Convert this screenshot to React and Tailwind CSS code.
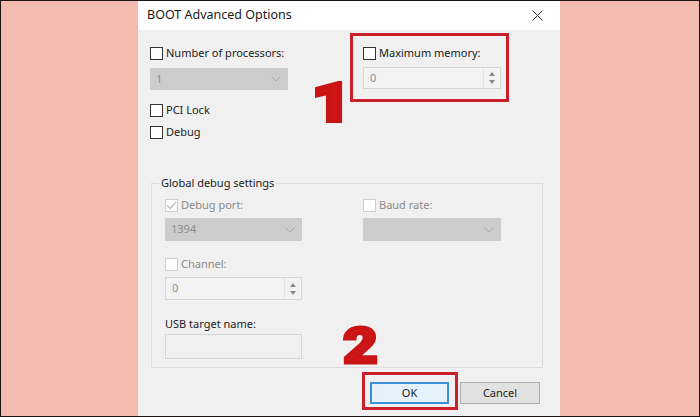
import React from "react";

function Box({ checked, disabled }) {
  return (
    <span
      className={
        disabled
          ? "w-[13px] h-[13px] border border-[#cfcfcf] bg-white flex items-center justify-center shrink-0"
          : "w-[13px] h-[13px] border border-[#333333] bg-white flex items-center justify-center shrink-0"
      }
    >
      {checked && (
        <svg width="11" height="9" viewBox="0 0 11 9">
          <path d="M1 4.5 L4 7.5 L10 1" fill="none" stroke="#bdbdbd" strokeWidth="1.3" />
        </svg>
      )}
    </span>
  );
}

function CheckRow({ label, checked, disabled, className = "" }) {
  return (
    <div className={`flex items-center h-[14px] whitespace-nowrap ${className}`}>
      <Box checked={checked} disabled={disabled} />
      <span className={disabled ? "ml-[3px] text-[11px] leading-[14px] text-[#8a8a8a]" : "ml-[3px] text-[11px] leading-[14px] text-[#1b1b1b]"}>
        {label}
      </span>
    </div>
  );
}

function Dropdown({ value, className = "" }) {
  return (
    <div className={`bg-[#cccccc] flex items-center justify-between pl-[6px] pr-[7px] text-[11px] text-[#8e8e8e] ${className}`}>
      <span>{value}</span>
      <svg width="10" height="6" viewBox="0 0 10 6">
        <path d="M0.5 0.5 L5 5 L9.5 0.5" fill="none" stroke="#a9a9a9" strokeWidth="1" />
      </svg>
    </div>
  );
}

function Spinner({ value, className = "" }) {
  return (
    <div className={`border border-[#d6d6d6] bg-[#f3f3f3] flex text-[11px] text-[#8e8e8e] ${className}`}>
      <span className="flex-1 flex items-center pl-[6px]">{value}</span>
      <div className="w-[17px] border-l border-[#e2e2e2] flex flex-col items-center justify-center gap-[4px]">
        <svg width="6" height="4" viewBox="0 0 6 4">
          <path d="M0 4 L3 0 L6 4 Z" fill="#8a8a8a" />
        </svg>
        <svg width="6" height="4" viewBox="0 0 6 4">
          <path d="M0 0 L3 4 L6 0 Z" fill="#8a8a8a" />
        </svg>
      </div>
    </div>
  );
}

export default function App() {
  return (
    <div className="relative w-[700px] h-[417px] overflow-hidden border border-[#1e1412] bg-[#f4bcb0] pl-[137px] [font-family:'Noto_Sans',sans-serif]">
      <div className="w-[422px] h-full flex flex-col bg-[#f0f0f0]">
        {/* title bar */}
        <div className="h-[29px] bg-white flex items-center justify-between pl-[9px] pr-[17px]">
          <span className="text-[12.5px] text-[#1a1a1a]">BOOT Advanced Options</span>
          <svg width="11" height="11" viewBox="0 0 11 11">
            <path d="M0.5 0.5 L10.5 10.5 M10.5 0.5 L0.5 10.5" stroke="#2a2a2a" strokeWidth="1" />
          </svg>
        </div>

        <div className="flex-1 flex flex-col pl-[12px] pr-[20px]">
          {/* top options */}
          <div className="flex pt-[3px]">
            <div className="w-[138px] pt-[13px] flex flex-col">
              <CheckRow label="Number of processors:" />
              <Dropdown value="1" className="mt-[8px] h-[22px]" />
              <CheckRow label="PCI Lock" className="mt-[13px]" />
              <CheckRow label="Debug" className="mt-[8px]" />
            </div>
            <div className="ml-[62px] w-[159px] h-[69px] border-[3px] border-[#c9212b] pt-[10px] pl-[10px]">
              <CheckRow label="Maximum memory:" />
              <Spinner value="0" className="mt-[7px] w-[138px] h-[22px]" />
            </div>
          </div>

          {/* group box */}
          <fieldset className="mt-[37px] ml-[1px] w-[392px] border border-[#dcdcdc]">
            <legend className="ml-[7px] px-[2px] text-[11px] leading-[14px] text-[#1b1b1b]">
              Global debug settings
            </legend>
            <div className="pt-[8px] pl-[13px] pb-[8px] flex flex-col">
              <div className="flex">
                <div className="w-[137px] flex flex-col">
                  <CheckRow label="Debug port:" checked disabled />
                  <Dropdown value="1394" className="mt-[6px] h-[23px]" />
                </div>
                <div className="ml-[61px] w-[138px] flex flex-col">
                  <CheckRow label="Baud rate:" disabled />
                  <Dropdown value="" className="mt-[6px] h-[23px]" />
                </div>
              </div>
              <CheckRow label="Channel:" disabled className="mt-[16px]" />
              <Spinner value="0" className="mt-[6px] w-[137px] h-[23px]" />
              <span className="mt-[17px] text-[11px] leading-[14px] text-[#1b1b1b]">USB target name:</span>
              <div className="mt-[3px] w-[137px] h-[25px] border border-[#d6d6d6] bg-[#f0f0f0]" />
            </div>
          </fieldset>

          {/* buttons */}
          <div className="flex justify-end items-start mt-[4px]">
            <div className="border-[3px] border-[#c9212b] pt-[7px] pl-[5px] pr-[6px] pb-[3px]">
              <button className="w-[79px] h-[22px] border-2 border-[#3c8fd4] bg-[#e5f1fb] text-[11px] text-[#1b1b1b] flex items-center justify-center">
                OK
              </button>
            </div>
            <button className="ml-[2px] mt-[10px] w-[80px] h-[22px] border border-[#adadad] bg-[#e1e1e1] text-[11px] text-[#1b1b1b] flex items-center justify-center">
              Cancel
            </button>
          </div>
        </div>
      </div>

      {/* annotations */}
      <span className="absolute left-[311px] top-[75px] origin-left scale-x-[1.25] text-[54px] leading-none font-black text-[#cf1616] [font-family:'Roboto',sans-serif] [-webkit-text-stroke:4px_#c81414]">
        1
      </span>
      <span className="absolute left-[342px] top-[320px] origin-left scale-x-[1.2] text-[50px] leading-none font-black text-[#cf1616] [font-family:'Roboto',sans-serif] [-webkit-text-stroke:3px_#c81414]">
        2
      </span>
    </div>
  );
}
